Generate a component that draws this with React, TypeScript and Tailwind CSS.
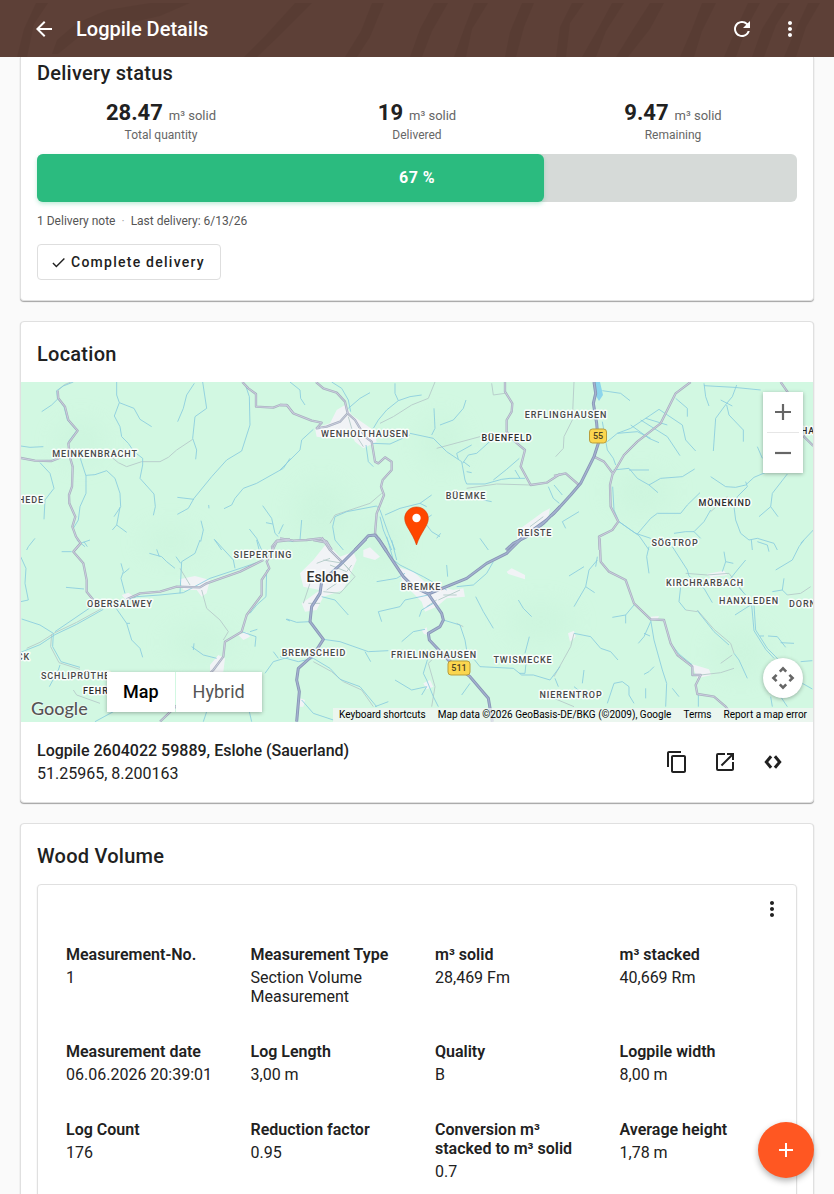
import React from "react";
import {
  MdAdd,
  MdArrowBack,
  MdCheck,
  MdContentCopy,
  MdMoreVert,
  MdOpenInNew,
  MdRefresh,
} from "react-icons/md";

type Tile = { x: number; y: number; built: string; water: string; lane: string; road: string; major: string };

/* Each tile covers 280 map units, drawn at three units of detail per map unit. */
const tiles: Tile[] = [
  {
    x: -11,
    y: -12,
    built: "",
    water:
      "M320 36L320 75L328 98L313 138L330 170L335 200L355 220L372 245L398 265L398 285L390 325L432 372L436 410L430 436M328 98L372 115L390 148L425 170M553 40L530 75L520 115L503 155M578 36L590 115L555 140L548 205L560 240L557 268M708 50L718 80L720 165L695 243L650 270L605 320L552 385L535 415L502 433M502 382L552 388M840 265L820 295L740 340L700 355L675 385L665 405L642 416M90 278L120 310L132 355L105 390L102 448M210 262L228 318L228 370L210 410L205 450L190 475M228 316L255 314L290 302L315 325L330 370L332 410L312 440M330 412L320 465L350 487M320 465L307 480M145 85L125 105L95 125M190 36L160 48L140 62L142 85L162 110L172 150L200 182L175 215M573 452L580 480L572 515M758 407L785 445L795 490L805 500M768 458L788 462M820 463L806 492M718 477L740 505L755 540M612 507L635 540M75 505L55 530L50 540M212 520L240 510M222 515L232 530M596 405L597 415M32 228L60 232L100 230",
    lane: "M305 262L325 278L350 290L395 275L450 275L475 262L500 240L548 208M190 33L163 44L143 62",
    road: "M32 264L75 272L125 273L150 263M143 62L145 85L165 110L175 150L203 182L175 220L180 262L188 290L186 350L177 375L178 400L196 440L187 470L198 500L212 520L190 545M697 36L715 55L738 72L738 110L790 113L810 105L832 106L850 130M840 508L800 512L786 530L788 540",
    major: "",
  },
  {
    x: 259,
    y: -12,
    built:
      "M170 120L195 105L215 135L280 180L290 215L250 235L225 215L205 175L150 205L110 200L105 175L150 160ZM715 480L790 425L810 415L805 440L770 475L710 510Z",
    water:
      "M155 36L185 55L205 90L212 125M205 115L240 85L270 68M30 36L60 60L62 85L75 105M345 40L345 70L355 92L320 120L295 150L280 175M355 92L390 80L425 75M100 178L65 210L60 240L30 270L0 300M390 190L460 205L500 245L545 275L555 330L560 342L615 342L665 328L690 325L735 325M640 330L680 298L718 265M705 300L720 325M558 90L550 115L520 150L480 165M462 115L465 175L455 195M535 268L530 250L575 225M548 280L565 255L590 250L640 205M550 275L570 290M560 305L575 308M258 225L265 275L280 290M275 220L330 222L390 195M315 435L360 415L420 400L455 375M420 400L440 410M158 470L165 440L200 425L290 408L300 420L325 490L345 540M158 470L165 510L190 540M300 440L310 480L335 540M440 465L455 485L480 500M470 505L482 490M440 445L455 435M610 390L635 395M65 450L60 510M805 350L820 385L838 400M600 505L625 540",
    lane: "M465 36L445 85L395 105L340 140L300 160M560 355L650 342L752 345M635 40L640 75L675 70M470 235L600 200M150 460L165 435L270 400L305 370M205 140L215 175L250 230M750 470L790 440M740 500L785 475",
    road: "M108 36L130 55L170 68L195 95L203 130L225 150L255 200L275 215L285 275L295 280L315 262L335 275L335 300L308 330L303 350L312 375L290 430L285 490L320 540M203 130L180 155L140 170L110 175L125 158L95 152L40 130L20 105L0 105M675 36L675 65L697 100L695 125L680 150L680 185L705 215L735 240L722 290L752 345L800 338L840 312M0 505L40 512L80 510L120 505L140 515L155 540",
    major: "M840 410L790 460L740 500L700 520L678 540M225 540L265 497L285 495L300 515L320 545",
  },
  {
    x: 533,
    y: -12,
    built: "",
    water:
      "M145 62L200 70L228 92M160 215L190 190L230 175L290 135L315 118L385 165L395 210L425 243M230 165L285 205L315 218M260 150L340 200L378 257M190 190L250 185L290 205M275 145L340 165M450 40L455 80L465 108M365 85L400 115L400 140M450 47L540 52L620 60M548 45L535 80L518 100L485 145L478 243M500 90L535 108M518 105L525 135L568 180L568 215M178 300L225 295L250 325L285 345L312 368M285 345L320 325L385 320L422 297M225 300L285 300M470 320L515 350L545 352L575 345L600 322L640 305M575 335L580 350L550 380L540 410L545 450L560 490L585 510L610 505L660 520L670 540M700 312L655 370L650 410L672 440M650 410L615 440M438 368L400 405L380 430L310 430L290 445L250 492M470 420L450 455L420 485L395 485L360 490M420 485L440 505M176 350L180 420L195 455L245 490L290 505M195 455L230 480L255 497L285 540M75 425L25 455L35 475M0 345L25 375M778 480L740 520M610 230L625 265M145 155L160 240L178 265L185 285",
    lane: "M60 36L55 150L30 200L28 235L5 260M520 380L470 425",
    road: "M410 36L365 70L320 160L250 215L210 255L175 315L168 345L170 410L193 455L175 480L135 500L137 540M120 260L150 275L178 312M0 318L35 310L75 345M680 36L700 65L750 200L778 228",
    major: "M120 36L125 70L118 100L128 160L133 220L120 260L80 340L50 375L0 430L-10 438",
  },
  {
    x: -11,
    y: 158,
    built:
      "M508 118L555 108L600 120L590 160L575 170L560 150L520 150ZM335 165L355 158L370 168L350 182ZM600 375L625 345L645 355L640 395L600 400ZM685 285L710 275L720 290L700 300Z",
    water:
      "M32 50L48 85L45 130L55 180L32 185M155 35L185 35M168 142L222 147M200 0L225 20M333 70L340 95L333 115L345 160M340 100L358 85M418 40L455 50L470 65L495 85M440 28L448 50M570 0L555 40L515 65L510 160M498 50L512 70M315 200L350 250L365 300L390 325L398 352M350 250L360 250M350 182L380 170L450 165L520 158L600 115L700 82L745 66M695 275L738 290L735 320M720 275L742 268M545 320L580 345L620 355M552 310L550 330M615 0L670 60L675 85M740 0L750 40M765 400L790 365L840 350M770 90L768 170L740 195L720 220M150 375L145 390L118 440M255 545L310 515M580 545L590 515M718 515L725 545M280 208L200 253L135 284L90 314L32 337M245 200L135 275M35 237L90 255L130 280L128 320L153 365L210 382M790 335L805 355M828 238L840 243",
    lane: "M575 150L590 205L630 240L655 275L640 300M540 135L510 85M280 203L200 247L135 278L90 307L50 325M125 282L122 320L147 368L210 388M190 450L200 465L270 490",
    road: "M212 10L190 35L220 70L230 120L230 155L250 180M350 178L390 160L450 155L500 140L570 142L590 130L690 95L760 60M840 0L800 5L788 30L770 65L778 85L755 120L755 165L710 225L695 275L645 305L640 350L610 390L560 440L450 545",
    major: "",
  },
  {
    x: 259,
    y: 158,
    built:
      "M140 10L100 60L60 100L70 140L120 150L65 190L75 215L110 210L130 170L190 150L230 60L220 35L180 50ZM350 80L400 95L440 130L520 150L550 145L555 170L500 175L470 200L435 215L425 185L370 130ZM250 30L270 22L300 50L285 60L250 50ZM680 95L695 85L735 105L735 118L685 102ZM425 270L440 262L445 285L432 282ZM430 430L450 420L460 440L440 448ZM60 475L75 480L70 500L58 500Z",
    water:
      "M290 125L350 115L375 100M320 -10L340 60L360 75L430 110L500 150M335 0L350 60M640 65L620 100L580 135L530 140M125 170L165 180L205 225M20 237L50 247L90 245M130 298L180 305L265 335L325 332M255 335L272 365M0 350L55 365L100 355L150 385L180 418L240 440L290 500M445 165L375 180L360 200L295 215L305 245M460 190L425 210L418 230M587 170L610 215L640 265M715 180L730 205L755 230M490 240L540 255L555 300L560 330L600 380L700 385L725 405L760 405L810 420L840 380M748 290L735 340M738 370L735 400L718 400M445 350L430 400L440 420L460 470L475 500M345 420L395 450L440 440L425 465M365 305L400 275L435 268M65 480L100 520L160 540M285 500L325 485M500 75L503 110M825 415L835 440M570 430L545 465M0 -2L40 5",
    lane: "M130 60L190 70L225 110L180 160L130 155M150 30L210 90M150 75L200 95L215 75M135 100L170 130L140 150M90 130L70 190M110 70L150 55M440 200L470 180M475 180L540 150M490 165L530 165M465 350L445 370L465 440L455 500M100 365L155 395L190 425L245 450L280 500M85 190L120 190M530 250L550 260",
    road: "M125 -8L150 30L185 65M100 0L140 8L155 30",
    major:
      "M258 -3L180 75L125 125L120 160L95 200L90 245L130 298L100 345L55 385L50 420L58 455L50 545M295 -5L330 50L370 110L400 140L445 162L560 115L620 70L680 40L730 -10L800 -60M445 162L485 220L490 240L480 260L445 280L448 300L505 360L570 410L625 475L637 545",
  },
  {
    x: 533,
    y: 158,
    built:
      "M412 372L465 388L472 405L430 415ZM458 102L510 92L520 105L470 112ZM42 280L60 272L65 290L48 305ZM290 230L315 228L310 240L292 240Z",
    water:
      "M130 60L105 90L95 140L60 200M95 140L122 158M45 108L90 80M240 195L215 225L175 232M215 225L215 250M290 240L300 300L325 390L338 430L335 500M290 245L270 290L253 310M270 280L288 288M60 280L110 290L140 325L170 335L192 360M355 20L400 90L405 108L450 145L475 188M380 140L375 185L395 210M430 212L480 275L525 315M540 340L555 360L580 415M600 195L605 270L640 325L665 350L700 390M593 195L600 272L635 328L660 355M510 35L515 65L505 95M515 65L538 70M575 60L550 90L530 115L575 165M750 0L735 20L715 60L665 90M592 0L595 30M610 5L640 15L645 35M690 115L685 150L655 155M685 150L700 165M642 288L670 290L695 322M680 308L720 310M617 288L630 288M90 390L85 430M60 440L105 475M160 490L180 430L205 425L225 440L225 465L240 490M300 380L285 395L270 403M275 445L275 475M355 445L375 470M650 470L655 500M680 470L700 500M740 365L775 362M745 430L775 447M285 20L278 50L285 100M350 310L375 342L415 375M130 50L125 80M543 225L590 195M433 465L433 500",
    lane: "M60 280L50 320L0 410M430 210L480 268L530 310L540 340M440 405L500 398L540 385M500 370L535 345M395 210L430 215M700 165L740 160L770 140M395 100L460 105L525 100L570 160M0 475L60 500",
    road: "M137 -5L140 65L165 95L215 120L240 190L290 238L330 240L350 310L370 345L415 380L415 405L440 405L425 435L430 462L480 470L515 500L530 520",
    major: "",
  },
];

const places: [string, number, number, ("start" | "middle" | "end")?, boolean?][] = [
  ["MEINKENBRACHT", 74, 75],
  ["HEDE", 23, 120.5, "end"],
  ["WENHOLTHAUSEN", 344, 54.5],
  ["ERFLINGHAUSEN", 545, 35.5],
  ["BÜENFELD", 486, 59, "middle", true],
  ["BÜEMKE", 445, 117],
  ["REISTE", 514, 153.5],
  ["MÖNEKIND", 704, 124, "middle", true],
  ["SÖGTROP", 654, 164],
  ["KIRCHRARBACH", 684, 203.5],
  ["HANXLEDEN", 728, 222],
  ["DORN", 768, 225, "start"],
  ["SIEPERTING", 242, 175.5],
  ["OBERSALWEY", 99, 225],
  ["BREMKE", 400, 208],
  ["BREMSCHEID", 293, 273.5],
  ["FRIELINGHAUSEN", 413, 275.5],
  ["TWISMECKE", 502, 280.5],
  ["NIERENTROP", 550, 315.5],
  ["SCHLIPRÜTHE", 20, 297, "start"],
  ["FEHR", 62, 312, "start", true],
  ["CK", 9, 278, "end"],
  ["HA", 780, 52, "start", true],
];

function Layer({ of, stroke, width }: { of: "water" | "lane" | "road" | "major"; stroke: string; width: number }) {
  return (
    <g fill="none" stroke={stroke} strokeWidth={width} strokeLinejoin="round" strokeLinecap="butt">
      {tiles.map((t) => (
        <path key={`${t.x}:${t.y}`} transform={`translate(${t.x} ${t.y}) scale(.33333)`} d={t[of]} />
      ))}
    </g>
  );
}

function RoadShield({ x, y, width, label }: { x: number; y: number; width: number; label: string }) {
  return (
    <g>
      <rect x={x - width / 2} y={y - 7} width={width} height="14" rx="3" fill="#fbd64f" stroke="#b99d3b" />
      <text x={x} y={y + 3.3} textAnchor="middle" className="text-[9px] font-medium" fill="#4d4322">
        {label}
      </text>
    </g>
  );
}

function MapCanvas() {
  return (
    <svg
      viewBox="0 0 792 340"
      preserveAspectRatio="xMidYMid slice"
      className="block h-full w-full"
      role="img"
      aria-label="Map of Eslohe and surroundings"
    >
      <defs>
        <filter id="soft" x="-50%" y="-50%" width="200%" height="200%">
          <feGaussianBlur stdDeviation="14" />
        </filter>
      </defs>
      <rect width="792" height="340" fill="#d2f8e2" />
      <g fill="#c2efd6" opacity=".35" filter="url(#soft)">
        <ellipse cx="150" cy="160" rx="30" ry="14" />
        <ellipse cx="60" cy="60" rx="24" ry="20" />
        <ellipse cx="300" cy="130" rx="26" ry="30" />
        <ellipse cx="420" cy="60" rx="20" ry="26" />
        <ellipse cx="620" cy="110" rx="30" ry="20" />
        <ellipse cx="520" cy="240" rx="34" ry="18" />
        <ellipse cx="720" cy="270" rx="28" ry="24" />
        <ellipse cx="360" cy="160" rx="18" ry="24" />
        <ellipse cx="180" cy="260" rx="34" ry="16" />
      </g>
      <g fill="#f1f3f6">
        {tiles.map((t) => (
          <path key={`${t.x}:${t.y}`} transform={`translate(${t.x} ${t.y}) scale(.33333)`} d={t.built} />
        ))}
      </g>
      <path d="M574 0h5l3 13-4 6-3-5z" fill="#8cd5ec" />
      <Layer of="lane" stroke="#b9cfcc" width={3} />
      <Layer of="water" stroke="#8accdf" width={2.6} />
      <Layer of="road" stroke="#a8b1bf" width={7} />
      <Layer of="road" stroke="#cbcddf" width={3} />
      <Layer of="major" stroke="#8795b5" width={9} />
      <Layer of="major" stroke="#a3b1cf" width={4} />
      <RoadShield x={577} y={54} width={17} label="55" />
      <RoadShield x={438} y={286} width={22} label="511" />
      <g
        className="text-[9px] font-medium tracking-widest"
        stroke="#fff"
        strokeOpacity=".85"
        strokeWidth="3"
        strokeLinejoin="round"
        paintOrder="stroke"
      >
        {places.map(([name, x, y, anchor = "middle", strong = false]) => (
          <text key={name} x={x} y={y} textAnchor={anchor} fill={strong ? "#2b2b2b" : "#484848"}>
            {name}
          </text>
        ))}
      </g>
      <text
        x="306.5"
        y="200"
        textAnchor="middle"
        className="text-sm font-medium"
        fill="#333"
        stroke="#fff"
        strokeOpacity=".85"
        strokeWidth="3"
        paintOrder="stroke"
      >
        Eslohe
      </text>
      <path
        d="M395.5 125c-6.700 0-11.800 5.100-11.800 11.500 0 7.500 7.600 13.500 11.800 26.500 4.200-13 11.800-19 11.800-26.500 0-6.400-5.100-11.500-11.800-11.500z"
        fill="#ff4700"
        stroke="#d93c00"
        strokeWidth=".6"
      />
      <circle cx="395.500" cy="136" r="4.200" fill="#fff" />
    </svg>
  );
}

function MapPanel() {
  return (
    <div className="relative h-[340px] overflow-hidden">
      <MapCanvas />
      <div className="absolute right-2.5 top-2.5 flex w-10 flex-col bg-white shadow-[0_1px_4px_rgba(0,0,0,0.3)]">
        <button type="button" aria-label="Zoom in" className="grid h-10 place-items-center">
          <svg viewBox="0 0 18 18" className="size-4.5" stroke="#666" strokeWidth="2.200">
            <path d="M1 9h16M9 1v16" />
          </svg>
        </button>
        <div className="mx-1 h-px bg-[#e6e6e6]" />
        <button type="button" aria-label="Zoom out" className="grid h-10 place-items-center">
          <svg viewBox="0 0 18 18" className="size-4.5" stroke="#666" strokeWidth="2.200">
            <path d="M1 9h16" />
          </svg>
        </button>
      </div>
      <button
        type="button"
        aria-label="Map camera controls"
        className="absolute bottom-6 right-2.5 grid size-10 place-items-center rounded-full bg-white shadow-[0_1px_4px_rgba(0,0,0,0.3)]"
      >
        <svg viewBox="0 0 24 24" className="size-6" fill="none" stroke="#666" strokeWidth="2.600">
          <path d="M8.800 5.600L12 2.400l3.200 3.200M8.800 18.400l3.200 3.200 3.200-3.200M5.600 8.800L2.400 12l3.200 3.200M18.400 8.800l3.200 3.200-3.200 3.200" />
        </svg>
      </button>
      <div className="absolute bottom-2.5 left-[86px] flex h-10 gap-px text-lg shadow-[0_1px_4px_rgba(0,0,0,0.3)]">
        <button type="button" className="bg-white px-4 font-medium text-black">
          Map
        </button>
        <button type="button" className="bg-white px-[17px] text-[#565656]">
          Hybrid
        </button>
      </div>
      <a
        href="#google"
        className="absolute bottom-0 left-2.5 font-['Lato',sans-serif] text-lg leading-7 font-medium text-[#555] [text-shadow:0_0_2px_#fff,0_0_2px_#fff]"
      >
        Google
      </a>
      <div className="absolute bottom-0 right-0 flex h-3.5 text-[10px] leading-[14px] text-black">
        <button type="button" className="bg-[#f5f5f5]/70 px-1.5">
          Keyboard shortcuts
        </button>
        <span className="bg-[#f5f5f5]/70 px-1.5">Map data ©2026 GeoBasis-DE/BKG (©2009), Google</span>
        <a href="#terms" className="bg-[#f5f5f5]/70 px-1.5">
          Terms
        </a>
        <a href="#report" className="bg-[#f5f5f5]/70 px-1.5">
          Report a map error
        </a>
      </div>
    </div>
  );
}

function Card({ title, first = false, children }: { title: string; first?: boolean; children: React.ReactNode }) {
  return (
    <section
      className={
        first
          ? "rounded-b border border-t-0 border-[#e0e0e0] bg-white shadow-[0_1px_1px_rgba(0,0,0,0.35)]"
          : "rounded border border-[#e0e0e0] bg-white shadow-[0_1px_1px_rgba(0,0,0,0.35)]"
      }
    >
      <h2
        className={
          first
            ? "px-4 text-xl leading-8 font-medium tracking-[0.0125em]"
            : "px-4 pt-4 pb-3 text-xl leading-8 font-medium tracking-[0.0125em]"
        }
      >
        {title}
      </h2>
      {children}
    </section>
  );
}

const quantities = [
  { value: "28.47", label: "Total quantity" },
  { value: "19", label: "Delivered" },
  { value: "9.47", label: "Remaining" },
];

const measurements = [
  ["Measurement-No.", "1"],
  ["Measurement Type", "Section Volume Measurement"],
  ["m³ solid", "28,469 Fm"],
  ["m³ stacked", "40,669 Rm"],
  ["Measurement date", "06.06.2026 20:39:01"],
  ["Log Length", "3,00 m"],
  ["Quality", "B"],
  ["Logpile width", "8,00 m"],
  ["Log Count", "176"],
  ["Reduction factor", "0.95"],
  ["Conversion m³ stacked to m³ solid", "0.7"],
  ["Average height", "1,78 m"],
];

export default function App() {
  return (
    <div className="relative flex h-screen flex-col bg-[#fafafa] font-['Roboto',sans-serif] text-[#212121]">
      <header className="relative flex h-[57px] shrink-0 items-center bg-[#5d4037] px-5 text-white">
        <svg
          viewBox="0 0 834 57"
          preserveAspectRatio="xMidYMid slice"
          className="absolute inset-0 h-full w-full"
          fill="#553a31"
          opacity=".55"
          aria-hidden="true"
        >
          <path d="M36 3h12L34 24l-7 33H17l7-28zM150 3h40l-30 13-45 10-35 10-22 18h-6l5-14 20-17 30-13zM295 3h17l-35 35-20 19h-13l22-22zM372 3h12l-14 34-13 20h-12l16-26zM434 3h14l-16 28-10 26h-12l10-28zM474 3h14l-16 26-6 28h-12l10-28zM522 3h12l-10 24-8 30h-11l5-25zM572 3h12l-14 20-4 34h-10l4-30zM612 3h12l-18 28-10 26h-14l16-28zM650 3h14l-14 26-22 28h-12l16-26zM702 3h14l-14 28-8 26h-14l12-28zM748 3h12l-14 26-10 28h-12l12-28zM778 3h12l-14 22-12 32h-12l10-28zM808 3h12l-14 24-10 30h-12l12-28z" />
        </svg>
        <button type="button" aria-label="Back" className="relative grid size-12 place-items-center">
          <MdArrowBack className="size-6" />
        </button>
        <h1 className="relative ml-2 flex-1 text-xl font-medium">Logpile Details</h1>
        <button type="button" aria-label="Refresh" className="relative grid size-12 place-items-center">
          <MdRefresh className="size-6" />
        </button>
        <button type="button" aria-label="More options" className="relative grid size-12 place-items-center">
          <MdMoreVert className="size-6" />
        </button>
      </header>

      <main className="flex min-h-0 flex-1 flex-col gap-5 overflow-y-auto px-5 pb-5 [scrollbar-width:none] *:shrink-0">
        <Card title="Delivery status" first>
          <div className="px-4 pb-5">
            <dl className="mt-2.5 grid grid-cols-3 gap-2 text-center text-[#666]">
              {quantities.map((q) => (
                <div key={q.label} className="flex flex-col-reverse">
                  <dt className="text-xs leading-4">{q.label}</dt>
                  <dd className="text-[22px] leading-7">
                    <strong className="font-bold text-[#212121]">{q.value}</strong>
                    <span className="ml-1.5 text-[13px] leading-none">m³ solid</span>
                  </dd>
                </div>
              ))}
            </dl>
            <div
              role="progressbar"
              aria-label="Delivered share"
              aria-valuenow={67}
              className="relative mt-[11px] grid h-12 items-center rounded-md bg-[#d6dad8]"
            >
              <div
                className="absolute inset-y-0 left-0 rounded-md bg-[#2bbb7f] shadow-[0_2px_4px_rgba(43,187,127,0.3)]"
                style={{ width: `${(19 / 28.47) * 100}%` }}
              />
              <span className="relative text-center font-bold tracking-wide text-white">67 %</span>
            </div>
            <p className="mt-[9px] text-xs leading-5 text-[#555]">
              1 Delivery note<span className="mx-1.5 text-[#aaa]">·</span>Last delivery: 6/13/26
            </p>
            <button
              type="button"
              className="mt-[13px] flex h-9 items-center gap-1 rounded border border-[#dedede] pr-[15px] pl-3 text-sm font-medium tracking-[0.0892857em]"
            >
              <MdCheck className="size-[17px]" />
              Complete delivery
            </button>
          </div>
        </Card>

        <Card title="Location">
          <MapPanel />
          <div className="flex h-20 items-center px-4">
            <div className="flex flex-1 flex-col gap-1 leading-[19px]">
              <p className="font-medium">Logpile 2604022 59889, Eslohe (Sauerland)</p>
              <p>51.25965, 8.200163</p>
            </div>
            <button type="button" aria-label="Copy coordinates" className="grid size-12 place-items-center">
              <MdContentCopy className="size-6" />
            </button>
            <button type="button" aria-label="Open in maps" className="grid size-12 place-items-center">
              <MdOpenInNew className="size-6" />
            </button>
            <button type="button" aria-label="Show code" className="grid size-12 place-items-center">
              <svg viewBox="0 0 24 24" className="size-6" fill="none" stroke="currentColor" strokeWidth="3">
                <path d="M10.100 6.200L5.300 12l4.800 5.800M13.900 6.200l4.800 5.800-4.800 5.800" />
              </svg>
            </button>
          </div>
        </Card>

        <Card title="Wood Volume">
          <div className="mx-4 mb-4 rounded border border-[#e0e0e0] shadow-[0_1px_1px_rgba(0,0,0,0.25)]">
            <div className="flex justify-end">
              <button type="button" aria-label="Measurement options" className="grid size-12 place-items-center">
                <MdMoreVert className="size-6" />
              </button>
            </div>
            <dl className="grid grid-cols-4 gap-9 px-7 pt-3 pb-7 leading-[19px]">
              {measurements.map(([label, value]) => (
                <div key={label} className="flex flex-col gap-1">
                  <dt className="font-semibold">{label}</dt>
                  <dd>{value}</dd>
                </div>
              ))}
            </dl>
          </div>
        </Card>
      </main>

      <button
        type="button"
        aria-label="Add"
        className="absolute bottom-4 right-5 grid size-14 place-items-center rounded-full bg-[#ff5722] text-white shadow-[0_3px_6px_rgba(0,0,0,0.3)]"
      >
        <MdAdd className="size-6" />
      </button>
    </div>
  );
}
